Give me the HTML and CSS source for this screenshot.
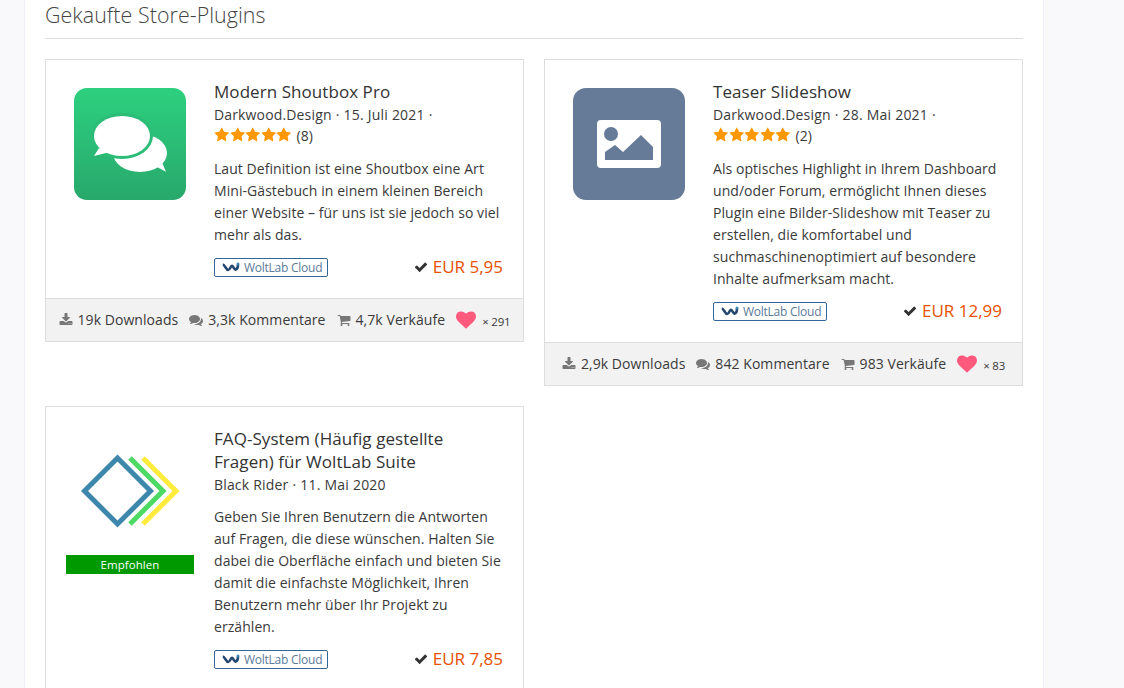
FILE: index.html
```html
<!DOCTYPE html>
<html lang="de">
<head>
    <meta charset="UTF-8">
    <meta name="viewport" content="width=device-width, initial-scale=1.0">
    <title>Gekaufte Store-Plugins</title>
    <link rel="stylesheet" href="styles.css">
</head>
<body>
    <svg class="sprites" aria-hidden="true">
        <symbol id="i-check" viewBox="0 0 1792 1792"><path d="M1671 566q0 40-28 68l-724 724-136 136q-28 28-68 28t-68-28l-136-136-362-362q-28-28-28-68t28-68l136-136q28-28 68-28t68 28l294 295 656-657q28-28 68-28t68 28l136 136q28 28 28 68z"/></symbol>
        <symbol id="i-download" viewBox="0 0 1792 1792"><path d="M1344 1344q0-26-19-45t-45-19-45 19-19 45 19 45 45 19 45-19 19-45zm256 0q0-26-19-45t-45-19-45 19-19 45 19 45 45 19 45-19 19-45zm128-224v320q0 40-28 68t-68 28h-1472q-40 0-68-28t-28-68v-320q0-40 28-68t68-28h465l135 136q58 56 136 56t136-56l136-136h464q40 0 68 28t28 68zm-325-569q17 41-14 70l-448 448q-18 19-45 19t-45-19l-448-448q-31-29-14-70 17-39 59-39h256v-448q0-26 19-45t45-19h256q26 0 45 19t19 45v448h256q42 0 59 39z"/></symbol>
        <symbol id="i-comments" viewBox="0 0 1792 1792"><path d="M1408 768q0 139-94 257t-256.5 186.5-353.5 68.5q-86 0-176-16-124 88-278 128-36 9-86 16h-3q-11 0-20.5-8t-11.5-21q-1-3-1-6.5t.5-6.5 2-6l2.5-5 3.5-5.5 4-5 4.5-5 4-4.5q5-6 23-25t26-29.5 22.5-29 25-38.5 20.5-44q-124-72-195-177t-71-224q0-139 94-257t256.5-186.5 353.5-68.5 353.5 68.5 256.5 186.5 94 257zm384 256q0 120-71 224.5t-195 176.5q10 24 20.5 44t25 38.5 22.5 29 26 29.5 23 25q1 1 4 4.5t4.5 5 4 5 3.5 5.5l2.5 5 2 6 .5 6.5-1 6.5q-3 14-13 22t-22 7q-50-7-86-16-154-40-278-128-90 16-176 16-271 0-472-132 58 4 88 4 161 0 309-45t264-129q125-92 192-212t67-254q0-77-23-152 129 71 204 178t75 230z"/></symbol>
        <symbol id="i-cart" viewBox="0 0 1792 1792"><path d="M704 1536q0 52-38 90t-90 38-90-38-38-90 38-90 90-38 90 38 38 90zm896 0q0 52-38 90t-90 38-90-38-38-90 38-90 90-38 90 38 38 90zm128-1088v512q0 24-16.5 42.5t-40.5 21.5l-1044 122q13 60 13 70 0 16-24 64h920q26 0 45 19t19 45-19 45-45 19h-1024q-26 0-45-19t-19-45q0-11 8-31.5t16-36 21.5-40 15.5-29.5l-177-823h-204q-26 0-45-19t-19-45 19-45 45-19h256q16 0 28.5 6.5t19.5 15.5 13 24.5 8 26 5.5 29.5 4.5 26h1201q26 0 45 19t19 45z"/></symbol>
        <symbol id="i-heart" viewBox="0 0 1792 1792"><path d="M896 1664q-26 0-44-18l-624-602q-10-8-27.5-26t-55.5-65.5-68-97.5-53.5-121-23.5-138q0-220 127-344t351-124q62 0 126.5 21.5t120 58 95.5 68.5 76 68q36-36 76-68t95.5-68.5 120-58 126.5-21.5q224 0 351 124t127 344q0 221-229 450l-623 600q-18 18-44 18z"/></symbol>
        <symbol id="i-star" viewBox="0 0 1792 1792"><path d="M1728 647q0 22-26 48l-363 354 86 500q1 7 1 20 0 21-10.5 35.5t-30.5 14.5q-19 0-40-12l-449-236-449 236q-22 12-40 12-21 0-31.5-14.5t-10.5-35.5q0-6 2-20l86-500-364-354q-25-27-25-48 0-37 56-46l502-73 225-455q19-41 49-41t49 41l225 455 502 73q56 9 56 46z"/></symbol>
        <symbol id="i-wave" viewBox="0 0 18 10"><path d="M.8 2.500C3 2.800 4 8 6.200 8S8.500 3.600 10 3.800 12 8.200 13.800 7.600 16 4 16 2.500" fill="none" stroke="#23476e" stroke-width="2.600"/><circle cx="16" cy="2" r="1.500" fill="#3a87b5"/></symbol>
    </svg>

    <main class="content">
        <h2 class="section-title">Gekaufte Store-Plugins</h2>

        <div class="plugin-grid">
            <article class="plugin">
                <div class="plugin-body">
                    <div class="plugin-icon">
                        <svg class="icon-box" viewBox="0 0 112 112">
                            <defs>
                                <linearGradient id="green" x1="0" y1="0" x2="0" y2="1">
                                    <stop offset="0" stop-color="#2dd07f"/>
                                    <stop offset="1" stop-color="#28a86c"/>
                                </linearGradient>
                            </defs>
                            <rect width="112" height="112" rx="13" fill="url(#green)"/>
                            <ellipse cx="66" cy="65" rx="27" ry="19" fill="#fff"/>
                            <path d="M81 78l11 5.700-4.300-10z" fill="#fff"/>
                            <ellipse cx="48" cy="48" rx="31" ry="23" fill="#2bbd77"/>
                            <ellipse cx="48" cy="48" rx="28" ry="20" fill="#fff"/>
                            <path d="M25 60l-5 8 14-3.500z" fill="#fff"/>
                        </svg>
                    </div>
                    <div class="plugin-info">
                        <h3 class="plugin-name">Modern Shoutbox Pro</h3>
                        <div class="plugin-meta">Darkwood.Design · 15. Juli 2021 ·</div>
                        <div class="rating">
                            <svg class="star"><use href="#i-star"/></svg><svg class="star"><use href="#i-star"/></svg><svg class="star"><use href="#i-star"/></svg><svg class="star"><use href="#i-star"/></svg><svg class="star"><use href="#i-star"/></svg>
                            <span class="rating-count">(8)</span>
                        </div>
                        <p class="plugin-desc">Laut Definition ist eine Shoutbox eine Art Mini-Gästebuch in einem kleinen Bereich einer Website – für uns ist sie jedoch so viel mehr als das.</p>
                        <div class="plugin-bottom">
                            <span class="cloud-badge"><svg class="wave"><use href="#i-wave"/></svg>WoltLab Cloud</span>
                            <span class="price"><svg class="check"><use href="#i-check"/></svg>EUR 5,95</span>
                        </div>
                    </div>
                </div>
                <div class="plugin-stats">
                    <span class="stat"><svg class="stat-icon"><use href="#i-download"/></svg>19k Downloads</span>
                    <span class="stat"><svg class="stat-icon"><use href="#i-comments"/></svg>3,3k Kommentare</span>
                    <span class="stat"><svg class="stat-icon"><use href="#i-cart"/></svg>4,7k Verkäufe</span>
                    <span class="stat likes"><svg class="heart"><use href="#i-heart"/></svg><small>× 291</small></span>
                </div>
            </article>

            <article class="plugin">
                <div class="plugin-body">
                    <div class="plugin-icon">
                        <svg class="icon-box" viewBox="0 0 112 112">
                            <rect width="112" height="112" rx="13" fill="#667b97"/>
                            <path d="M28 32h56a4 4 0 0 1 4 4v40a4 4 0 0 1-4 4H28a4 4 0 0 1-4-4V36a4 4 0 0 1 4-4z" fill="#fff"/>
                            <circle cx="38" cy="46" r="7" fill="#667b97"/>
                            <path d="M32 72v-8l10-7 8 7 18-17 12 12v13z" fill="#667b97"/>
                        </svg>
                    </div>
                    <div class="plugin-info">
                        <h3 class="plugin-name">Teaser Slideshow</h3>
                        <div class="plugin-meta">Darkwood.Design · 28. Mai 2021 ·</div>
                        <div class="rating">
                            <svg class="star"><use href="#i-star"/></svg><svg class="star"><use href="#i-star"/></svg><svg class="star"><use href="#i-star"/></svg><svg class="star"><use href="#i-star"/></svg><svg class="star"><use href="#i-star"/></svg>
                            <span class="rating-count">(2)</span>
                        </div>
                        <p class="plugin-desc">Als optisches Highlight in Ihrem Dashboard und/oder Forum, ermöglicht Ihnen dieses Plugin eine Bilder-Slideshow mit Teaser zu erstellen, die komfortabel und suchmaschinenoptimiert auf besondere Inhalte aufmerksam macht.</p>
                        <div class="plugin-bottom">
                            <span class="cloud-badge"><svg class="wave"><use href="#i-wave"/></svg>WoltLab Cloud</span>
                            <span class="price"><svg class="check"><use href="#i-check"/></svg>EUR 12,99</span>
                        </div>
                    </div>
                </div>
                <div class="plugin-stats">
                    <span class="stat"><svg class="stat-icon"><use href="#i-download"/></svg>2,9k Downloads</span>
                    <span class="stat"><svg class="stat-icon"><use href="#i-comments"/></svg>842 Kommentare</span>
                    <span class="stat"><svg class="stat-icon"><use href="#i-cart"/></svg>983 Verkäufe</span>
                    <span class="stat likes"><svg class="heart"><use href="#i-heart"/></svg><small>× 83</small></span>
                </div>
            </article>

            <article class="plugin">
                <div class="plugin-body">
                    <div class="plugin-icon">
                        <svg class="icon-box" viewBox="0 0 112 112">
                            <path d="M69 23l33 33-33 33" fill="none" stroke="#ffeb3b" stroke-width="5"/>
                            <path d="M56 23l33 33-33 33" fill="none" stroke="#4cd964" stroke-width="5"/>
                            <path d="M43.500 23l33 33-33 33-33-33z" fill="none" stroke="#3d87ad" stroke-width="5"/>
                        </svg>
                        <span class="recommended">Empfohlen</span>
                    </div>
                    <div class="plugin-info">
                        <h3 class="plugin-name">FAQ-System (Häufig gestellte Fragen) für WoltLab Suite</h3>
                        <div class="plugin-meta">Black Rider · 11. Mai 2020</div>
                        <p class="plugin-desc">Geben Sie Ihren Benutzern die Antworten auf Fragen, die diese wünschen. Halten Sie dabei die Oberfläche einfach und bieten Sie damit die einfachste Möglichkeit, Ihren Benutzern mehr über Ihr Projekt zu erzählen.</p>
                        <div class="plugin-bottom">
                            <span class="cloud-badge"><svg class="wave"><use href="#i-wave"/></svg>WoltLab Cloud</span>
                            <span class="price"><svg class="check"><use href="#i-check"/></svg>EUR 7,85</span>
                        </div>
                    </div>
                </div>
            </article>
        </div>
    </main>
</body>
</html>
```

FILE: styles.css
```css
html, body {
    height: 688px;
    overflow: hidden;
}
body {
    margin: 0;
    background: #f9f9fb;
    font-family: "Open Sans", Arial, sans-serif;
    font-size: 14px;
    letter-spacing: 0.06px;
    line-height: 22px;
    color: #3a3a3a;
}
.sprites {
    display: none;
}
.content {
    box-sizing: border-box;
    width: 1020px;
    height: 688px;
    margin-left: 24px;
    padding: 0 20px;
    background: #fff;
    border-left: 1px solid #edf0f7;
    border-right: 1px solid #edf0f7;
    overflow: hidden;
}
.section-title {
    margin: 0 0 20px;
    padding-bottom: 8px;
    height: 30px;
    border-bottom: 1px solid #ddd;
    font-size: 21.4px;
    font-weight: 300;
    line-height: 30px;
    color: #444;
}
.plugin-grid {
    display: grid;
    grid-template-columns: 1fr 1fr;
    gap: 20px;
    align-items: start;
}
.plugin {
    border: 1px solid #ddd;
}
.plugin-body {
    display: flex;
    gap: 20px;
    padding: 20px;
}
.plugin-icon {
    flex: none;
    width: 128px;
    padding-top: 8px;
}
.icon-box {
    display: block;
    width: 112px;
    height: 112px;
    margin: 0 auto;
}
.recommended {
    display: block;
    margin-top: 8px;
    height: 19px;
    background: #090;
    color: #fff;
    font-size: 11.5px;
    font-weight: 500;
    line-height: 19px;
    text-align: center;
}
.plugin-info {
    flex: 1;
    min-width: 0;
}
.plugin-name {
    margin: 0;
    font-size: 17px;
    font-weight: 400;
    line-height: 23px;
    color: #333;
}
.plugin-meta {
    letter-spacing: 0.15px;
    word-spacing: 0.3px;
    line-height: 23px;
}
.rating {
    display: flex;
    align-items: flex-start;
    height: 22px;
}
.star {
    width: 15.5px;
    height: 16px;
    margin-top: 1px;
    fill: #ff9800;
}
.rating-count {
    margin-left: 5px;
    line-height: 19px;
}
.plugin-desc {
    margin: 10px 0 0;
}
.plugin-bottom {
    display: flex;
    justify-content: space-between;
    align-items: center;
    margin-top: 10px;
}
.cloud-badge {
    display: flex;
    align-items: center;
    gap: 4px;
    height: 17px;
    padding: 0 5px 0 7px;
    border: 1px solid #336699;
    border-radius: 2px;
    font-size: 12px;
    letter-spacing: -0.25px;
    line-height: 17px;
    color: #5a7a9a;
}
.wave {
    width: 18px;
    height: 10px;
}
.price {
    display: flex;
    align-items: center;
    font-size: 17px;
    letter-spacing: 0;
    color: #e65100;
}
.check {
    width: 14px;
    height: 14px;
    margin-right: 5px;
    fill: #333;
}
.plugin-stats {
    display: flex;
    justify-content: center;
    align-items: center;
    gap: 11px;
    height: 42px;
    background: #f2f2f2;
    border-top: 1px solid #ddd;
}
.stat {
    display: flex;
    align-items: center;
    white-space: nowrap;
}
.stat-icon {
    width: 14px;
    height: 14px;
    margin-right: 5px;
    fill: #777;
}
.heart {
    width: 20px;
    height: 20px;
    margin-right: 6px;
    fill: #ff5a7e;
}
.likes small {
    font-size: 11.5px;
    letter-spacing: -0.2px;
    margin-top: 3px;
}
```
